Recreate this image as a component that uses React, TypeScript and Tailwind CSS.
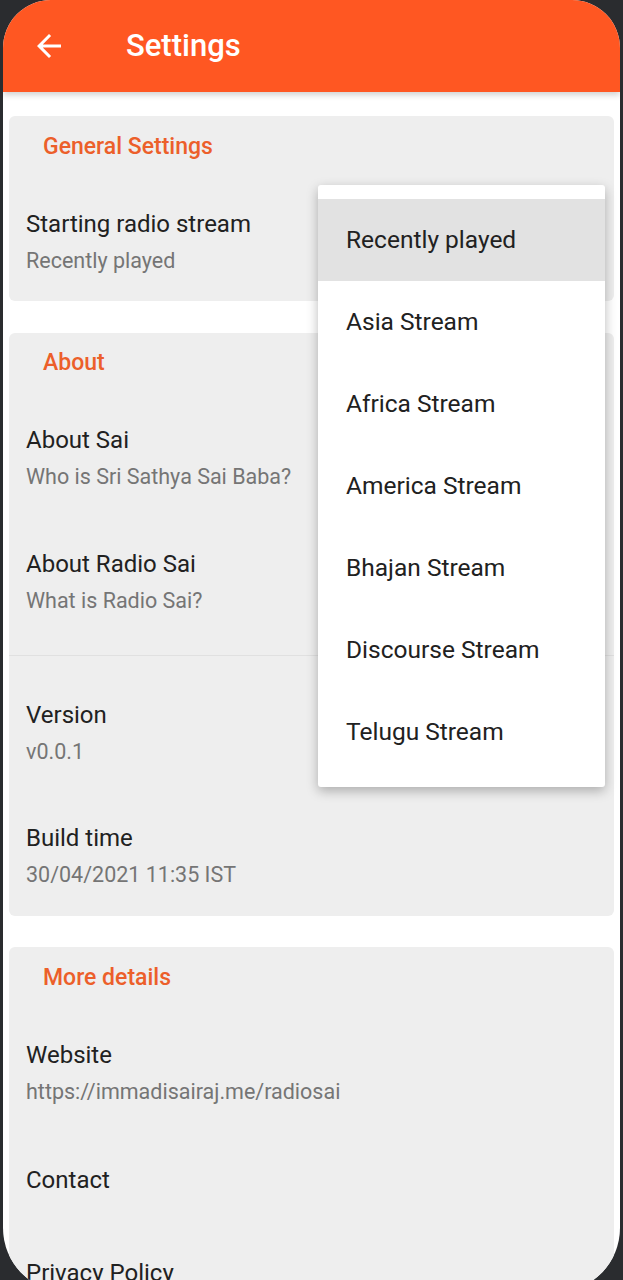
import React from 'react';

const streams = [
  'Recently played',
  'Asia Stream',
  'Africa Stream',
  'America Stream',
  'Bhajan Stream',
  'Discourse Stream',
  'Telugu Stream',
];

const Category = ({ title }: { title: string }) => (
  <div className="mb-[18px] flex h-[30px] items-center pl-[34px] text-[23px] font-medium text-[#EC5F2A]">
    {title}
  </div>
);

const Item = ({
  title,
  summary,
  pad = 'py-[29px]',
}: {
  title: string;
  summary?: string;
  pad?: string;
}) => (
  <div className={`${pad} pl-[17px]`}>
    <div className="flex h-[30px] items-center text-[24px] text-[#212121]">{title}</div>
    {summary && (
      <div className="mt-[8px] flex h-[28px] items-center text-[21.5px] text-[#757575]">
        {summary}
      </div>
    )}
  </div>
);

export default function App() {
  return (
    <div
      className="h-[1280px] w-[623px] overflow-hidden bg-[#2a2c2f] pl-[3px]"
      style={{ fontFamily: 'Roboto, "Noto Sans", sans-serif' }}
    >
      <div className="relative h-[1292px] w-[617px] overflow-hidden rounded-t-[48px] rounded-b-[64px] bg-white">
        {/* app bar */}
        <div className="relative z-10 flex h-[92px] items-center bg-[#FF5722] shadow-[0_3px_6px_rgba(0,0,0,0.18)]">
          <svg className="ml-[28px] h-[36px] w-[36px]" viewBox="0 0 24 24" fill="white">
            <path d="M20 11H7.83l5.59-5.59L12 4l-8 8 8 8 1.41-1.41L7.83 13H20v-2z" />
          </svg>
          <h1 className="ml-[59px] text-[31px] font-medium text-white">Settings</h1>
        </div>

        <div className="flex flex-col gap-[32px] px-[6px] pt-[24px]">
          <div className="rounded-[6px] bg-[#EEEEEE] pt-[16px]">
            <Category title="General Settings" />
            <Item title="Starting radio stream" summary="Recently played" pad="pt-[29px] pb-[26px]" />
          </div>

          <div className="rounded-[6px] bg-[#EEEEEE] pt-[15px]">
            <Category title="About" />
            <Item title="About Sai" summary="Who is Sri Sathya Sai Baba?" />
            <Item title="About Radio Sai" summary="What is Radio Sai?" />
            <div className="mt-[11px] mb-[15px] h-px bg-[#E0E0E0]" />
            <Item title="Version" summary="v0.0.1" pad="pt-[29px] pb-[28px]" />
            <Item title="Build time" summary="30/04/2021 11:35 IST" pad="pt-[29px] pb-[27px]" />
          </div>

          <div className="-mt-[1px] rounded-[6px] bg-[#EEEEEE] pt-[16px] pb-[40px]">
            <Category title="More details" />
            <Item title="Website" summary="https://immadisairaj.me/radiosai" />
            <Item title="Contact" pad="py-[30px]" />
            <Item title="Privacy Policy" pad="py-[33px]" />
          </div>
        </div>

        {/* stream picker popup */}
        <div className="absolute top-[185px] left-[315px] z-20 w-[287px] rounded-[3px] bg-white py-[14px] shadow-[0_4px_12px_rgba(0,0,0,0.28)]">
          {streams.map((s, i) => (
            <div
              key={s}
              className={
                i === 0
                  ? 'flex h-[82px] items-center bg-[#E2E2E2] pl-[28px] text-[24.5px] text-[#212121]'
                  : 'flex h-[82px] items-center pl-[28px] text-[24.5px] text-[#212121]'
              }
            >
              {s}
            </div>
          ))}
        </div>
      </div>
    </div>
  );
}
